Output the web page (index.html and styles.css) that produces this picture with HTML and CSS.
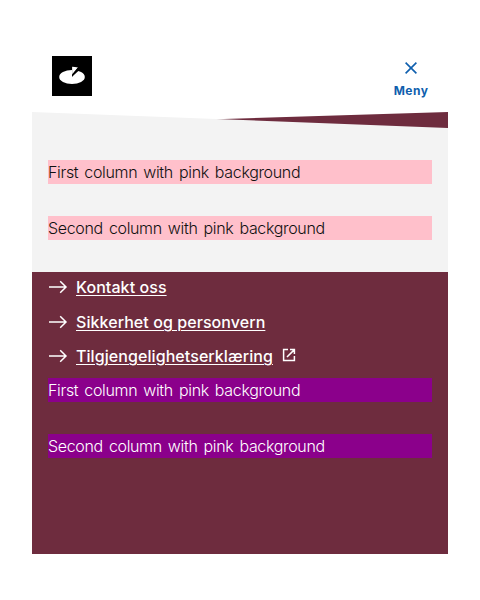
FILE: index.html
```html
<!DOCTYPE html>
<html lang="nb">
<head>
<meta charset="utf-8">
<meta name="viewport" content="width=device-width, initial-scale=1">
<title>Meny</title>
<link rel="stylesheet" href="styles.css">
</head>
<body>
<header class="header">
  <a class="logo" href="#" aria-label="Logo">
    <svg width="40" height="40" viewBox="0 0 40 40"><rect width="40" height="40"/><ellipse cx="20" cy="21" rx="12.8" ry="6.9" fill="#fff"/><path d="M20 20.7V10.5H28L20 20.7Z"/><path d="M20.1 19.3V10.8Q22.9 10.8 26 11.4Z" fill="#fff"/><path d="M20 20.8V18.4L25.6 11.8H28V13.5Z"/></svg>
  </a>
  <button class="menu-button" type="button">
    <svg width="24" height="24" viewBox="0 0 24 24" fill="none" stroke="currentColor" stroke-width="1.6"><path d="M6.6 6.6 17.4 17.4M17.4 6.6 6.6 17.4"/></svg>
    <span>Meny</span>
  </button>
</header>
<main class="panel">
  <svg class="slant" viewBox="0 0 416 16" preserveAspectRatio="none"><path class="slant-dark" d="M0 13 416 0V16H0Z"/><path class="slant-light" d="M0 0 416 16H0Z"/></svg>
  <section class="columns light">
    <div class="column">First column with pink background</div>
    <div class="column">Second column with pink background</div>
  </section>
  <section class="dark">
    <ul class="links">
      <li><svg class="arrow" viewBox="0 0 20 20"><path d="M1 10H18M12.2 4.2 18 10 12.2 15.8"/></svg><a href="#">Kontakt oss</a></li>
      <li><svg class="arrow" viewBox="0 0 20 20"><path d="M1 10H18M12.2 4.2 18 10 12.2 15.8"/></svg><a href="#">Sikkerhet og personvern</a></li>
      <li><svg class="arrow" viewBox="0 0 20 20"><path d="M1 10H18M12.2 4.2 18 10 12.2 15.8"/></svg><a href="#">Tilgjengelighetserklæring</a><svg class="external" viewBox="0 0 14 14"><path d="M6 1.6H1.6V12.4H12.4V8M8 1.6H12.4V6M12.4 1.6 5 9"/></svg></li>
    </ul>
    <div class="columns">
      <div class="column">First column with pink background</div>
      <div class="column">Second column with pink background</div>
    </div>
  </section>
</main>
</body>
</html>
```
FILE: styles.css
```css
* { box-sizing: border-box; }
body { margin: 0; padding: 32px; background: #fff; color: #1c1b1e; font: 400 16px/24px Inter, sans-serif; }
.header { display: flex; justify-content: space-between; align-items: center; height: 80px; padding: 0 19.5px 0 20px; }
.logo { display: block; height: 40px; margin-top: 8px; }
.logo svg { display: block; }
.menu-button { display: flex; flex-direction: column; align-items: center; margin-top: 13px; padding: 0; border: 0; background: none; color: #0f5fae; font: 700 12px/21px Inter, sans-serif; letter-spacing: .5px; }
.panel { width: 416px; }
.slant { display: block; width: 100%; height: 16px; }
.slant-dark { fill: #6e2c3e; }
.slant-light { fill: #f3f3f3; }
.columns { display: grid; gap: 32px; }
.light { padding: 32px 16px; background: #f3f3f3; }
.column { height: 24px; background: pink; color: #111; font-weight: 300; letter-spacing: -.34px; word-spacing: 1.9px; }
.dark { height: 282px; padding: 0 16px; background: #6e2c3e; color: #fff; }
.dark .column { background: darkmagenta; color: #fff; }
.links { display: flex; flex-direction: column; height: 106px; margin: 0; padding: 3px 0 0; list-style: none; }
.links li { display: flex; align-items: center; height: 34.5px; padding-bottom: 10px; font-weight: 500; letter-spacing: .07px; }
.links li:nth-child(2) { padding: .5px 0 9.5px; }
.links a { color: inherit; text-decoration: underline; text-decoration-thickness: 1px; text-underline-offset: 2px; }
.arrow, .external { fill: none; stroke: currentColor; stroke-width: 1.5; }
.arrow { width: 20px; height: 20px; margin-right: 8px; }
.external { width: 14px; height: 14px; margin: -2px 0 0 9px; }
```
